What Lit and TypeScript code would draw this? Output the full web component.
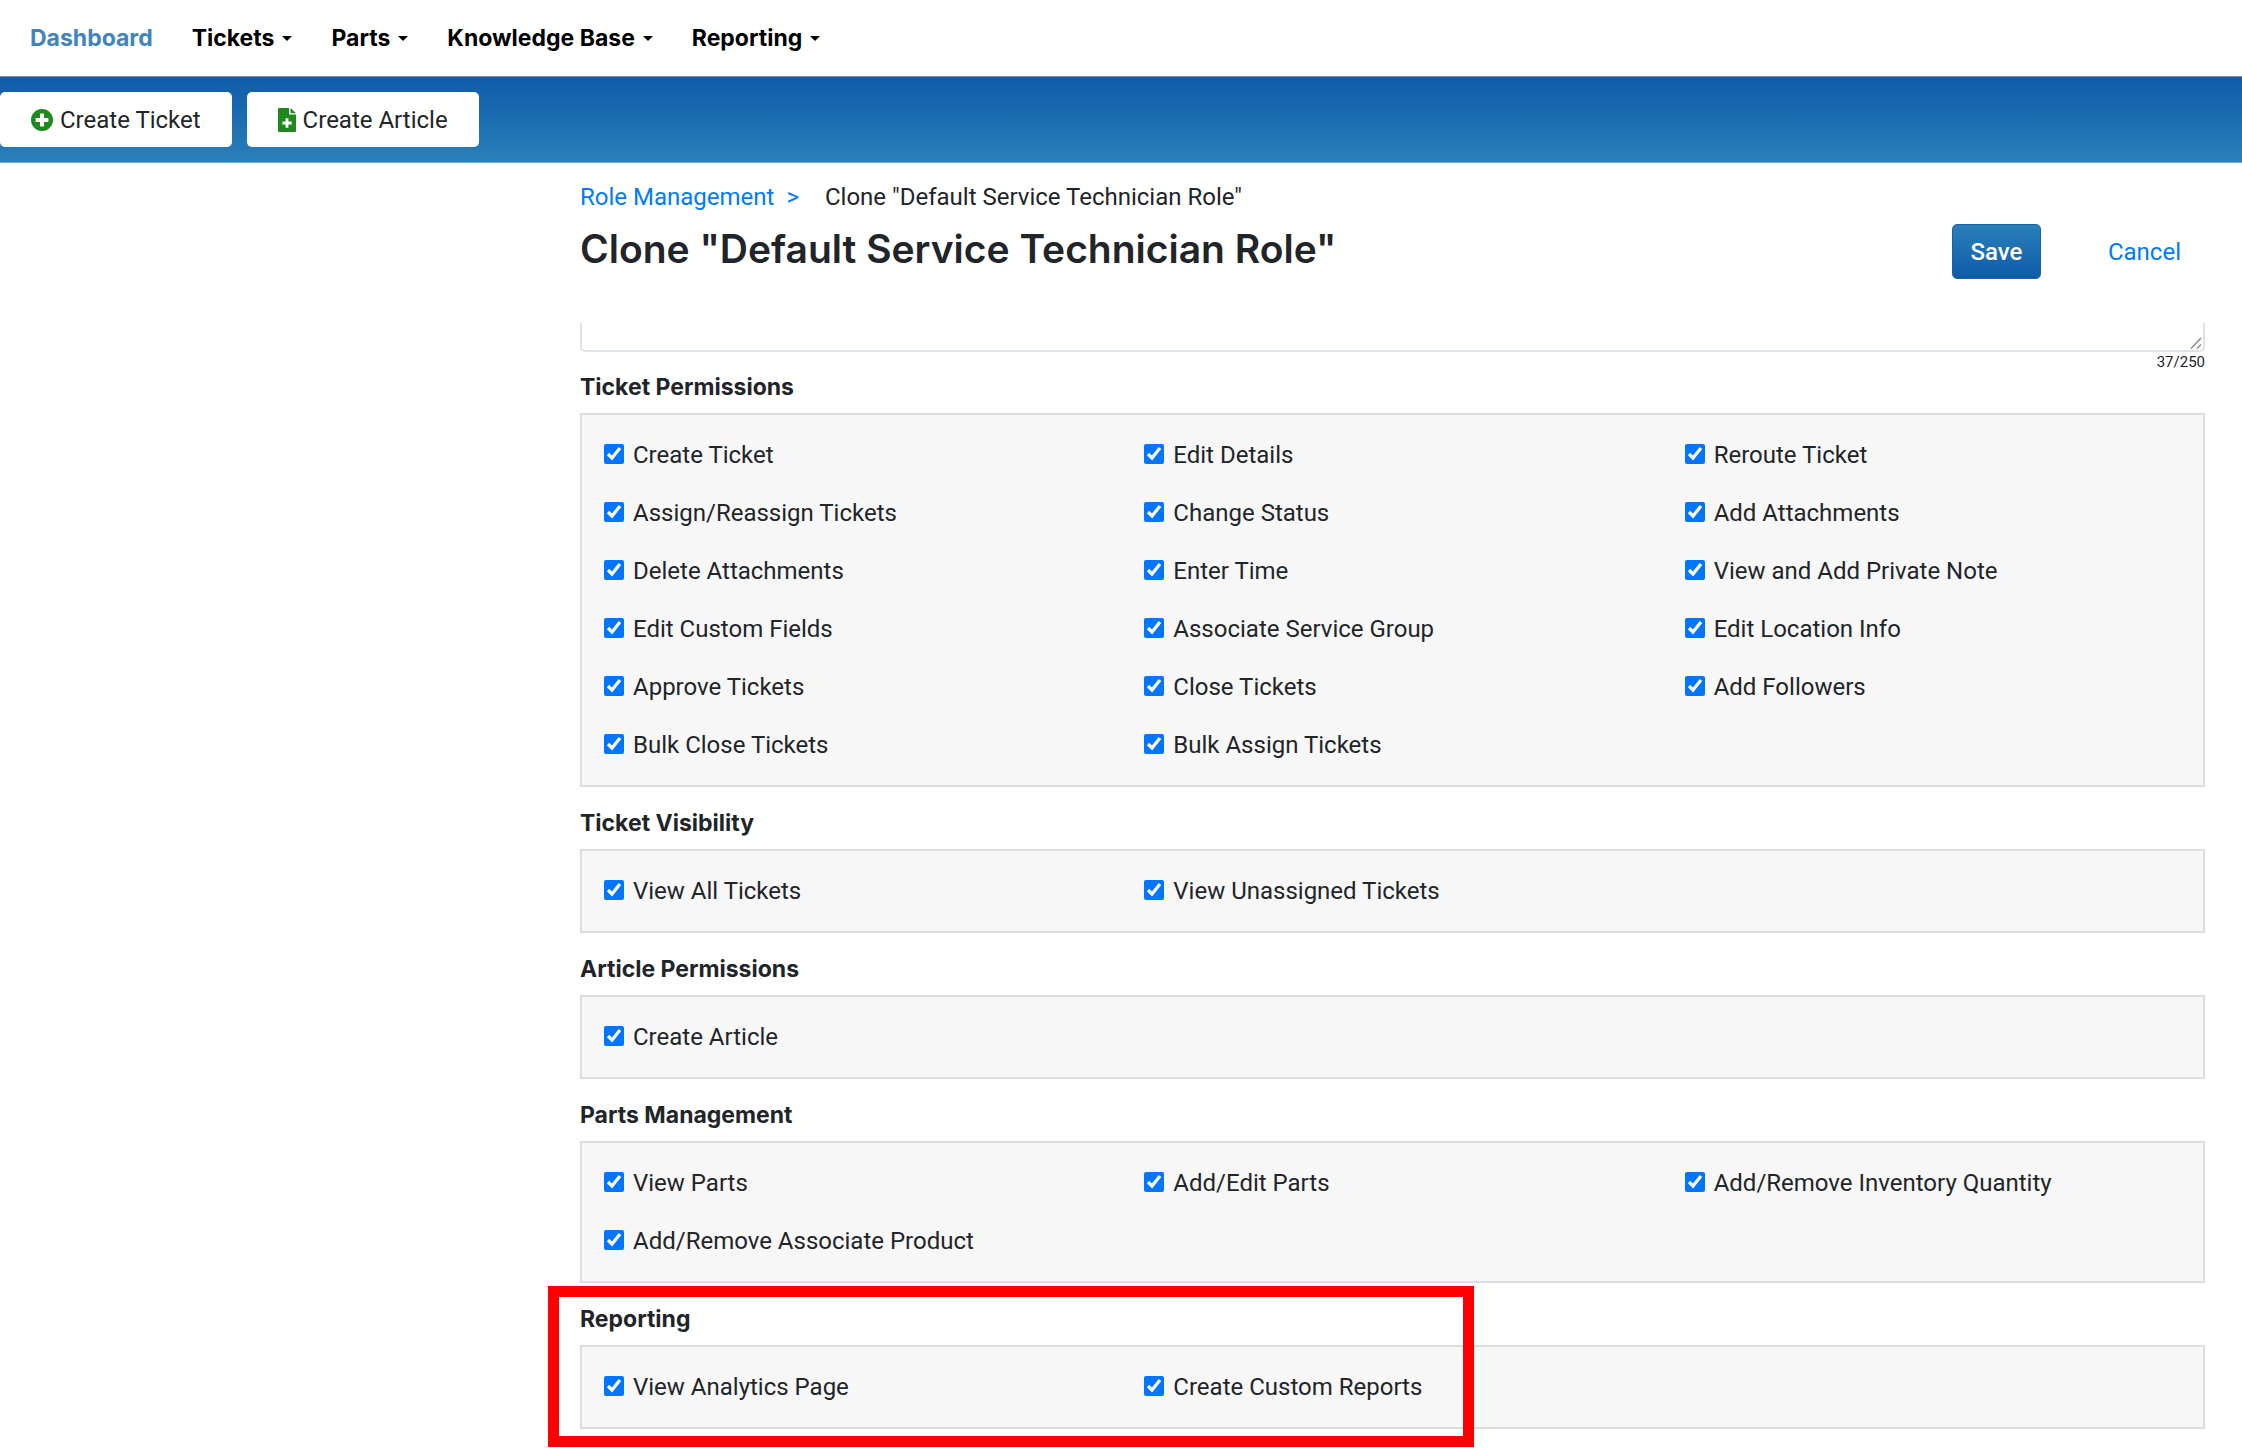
import { LitElement, html, css, svg } from "lit";
import { customElement, property } from "lit/decorators.js";

const plusCircle = svg`<path fill="#1e8a1e" fill-rule="evenodd" d="M11 0a11 11 0 1 0 0 22a11 11 0 0 0 0-22zM9 4.600h4v4.400h4.400v4h-4.400v4.400h-4v-4.400H4.600V9H9z"/>`;
const plusFile = svg`<path fill="#1e8a1e" fill-rule="evenodd" d="M1 0h10v6.500H18V23a1 1 0 0 1-1 1H1a1 1 0 0 1-1-1V1a1 1 0 0 1 1-1zM7.600 10.300v3.300H4.300v2.800h3.300v3.300h2.800v-3.300h3.300v-2.800h-3.300v-3.300z"/><path fill="#1e8a1e" d="M12.500 0L18 5.200h-5.500z"/>`;

@customElement("permission-section")
export class PermissionSection extends LitElement {
  @property() heading = "";
  @property({ attribute: false }) items: string[] = [];
  @property({ type: Boolean }) highlighted = false;

  static styles = css`
    :host {
      display: block;
      position: relative;
    }
    .group {
      margin: 0;
      padding: 0;
      border: 0;
      min-width: 0;
    }
    .title {
      box-sizing: border-box;
      height: 48px;
      padding: 4px 0 0;
      font-family: Inter, Roboto, "Liberation Sans", sans-serif;
      font-size: 23px;
      font-weight: 700;
      line-height: 36px;
    }
    .box {
      display: grid;
      grid-template-columns: repeat(3, minmax(0, 1fr));
      border: 2px solid #d9dee3;
      background: #f7f7f7;
      padding: 11px 0;
    }
    .item {
      display: flex;
      align-items: center;
      gap: 9px;
      height: 58px;
      padding-left: 22px;
    }
    .tick {
      width: 20px;
      height: 20px;
      margin: 0 0 3px;
      accent-color: #0075ff;
    }
    .mark {
      position: absolute;
      top: -11px;
      bottom: -18px;
      left: -32px;
      width: 57%;
      box-sizing: border-box;
      border: 11px solid #ff0000;
      pointer-events: none;
    }
  `;

  render() {
    return html`
      <fieldset class="group">
        <legend class="title">${this.heading}</legend>
        <div class="box">
          ${this.items.map(
            (item) => html`<label class="item"><input class="tick" type="checkbox" checked />${item}</label>`
          )}
        </div>
      </fieldset>
      ${this.highlighted ? html`<div class="mark"></div>` : null}
    `;
  }
}

const sections = [
  {
    heading: "Ticket Permissions",
    items: [
      "Create Ticket", "Edit Details", "Reroute Ticket",
      "Assign/Reassign Tickets", "Change Status", "Add Attachments",
      "Delete Attachments", "Enter Time", "View and Add Private Note",
      "Edit Custom Fields", "Associate Service Group", "Edit Location Info",
      "Approve Tickets", "Close Tickets", "Add Followers",
      "Bulk Close Tickets", "Bulk Assign Tickets",
    ],
  },
  { heading: "Ticket Visibility", items: ["View All Tickets", "View Unassigned Tickets"] },
  { heading: "Article Permissions", items: ["Create Article"] },
  {
    heading: "Parts Management",
    items: ["View Parts", "Add/Edit Parts", "Add/Remove Inventory Quantity", "Add/Remove Associate Product"],
  },
  { heading: "Reporting", items: ["View Analytics Page", "Create Custom Reports"], highlighted: true },
];

@customElement("app-root")
export class AppRoot extends LitElement {
  static styles = css`
    :host {
      display: block;
      background: #fff;
      color: #212529;
      font-family: Roboto, Inter, "Liberation Sans", sans-serif;
      font-size: 24px;
      line-height: 36px;
    }
    a {
      color: #007bff;
      text-decoration: none;
    }
    .nav {
      display: flex;
      align-items: center;
      gap: 39px;
      height: 77px;
      padding-left: 30px;
      border-bottom: 1px solid #8a8f96;
      font-family: Inter, Roboto, "Liberation Sans", sans-serif;
      font-size: 23px;
      font-weight: 700;
      box-sizing: border-box;
    }
    .nav a {
      color: #000;
      display: flex;
      align-items: center;
      gap: 8px;
    }
    .nav .active {
      color: #3e83c3;
    }
    .caret {
      border: 5px solid transparent;
      border-top-color: #000;
      border-bottom: 0;
    }
    .bar {
      display: flex;
      align-items: center;
      gap: 15px;
      height: 86px;
      box-sizing: border-box;
      background: linear-gradient(#0f5ba9, #2a80b9);
      border-bottom: 1px solid #6fb0d8;
    }
    .create {
      display: flex;
      align-items: center;
      gap: 7px;
      height: 55px;
      padding: 0 31px;
      border: 0;
      border-radius: 5px;
      background: #fff;
      color: #212529;
      font: inherit;
    }
    .main {
      padding: 16px 37px 20px 580px;
    }
    .crumbs {
      display: flex;
      gap: 26px;
    }
    .crumbs a {
      display: flex;
      gap: 12px;
    }
    .head {
      display: flex;
      align-items: center;
      height: 73px;
    }
    .head h1 {
      flex: 1;
      margin: 0;
      padding-bottom: 5px;
      font-family: Inter, Roboto, "Liberation Sans", sans-serif;
      font-size: 39px;
      line-height: 48px;
      font-weight: 600;
    }
    .save {
      height: 55px;
      width: 89px;
      padding: 0;
      margin-right: 67px;
      border: 1px solid #1a62a5;
      border-radius: 5px;
      background: linear-gradient(#2a80b9, #0f5ba9);
      color: #fff;
      font: inherit;
      font-weight: 500;
    }
    .cancel {
      margin-right: 24px;
    }
    .clip {
      position: relative;
      display: flex;
      align-items: flex-end;
      height: 29px;
      margin-top: 35px;
      overflow: hidden;
    }
    .description {
      width: 100%;
      height: 120px;
      flex: none;
      box-sizing: border-box;
      border: 2px solid #dee3e8;
      border-radius: 5px;
      background: #fff;
      font: inherit;
      resize: none;
    }
    .grip {
      position: absolute;
      right: 3px;
      bottom: 3px;
    }
    .count {
      font-size: 15px;
      line-height: 20px;
      height: 13px;
      text-align: right;
    }
    .sections {
      display: flex;
      flex-direction: column;
      gap: 14px;
    }
  `;

  private menu(label: string) {
    return html`<a href="#">${label}<span class="caret"></span></a>`;
  }

  render() {
    return html`
      <nav class="nav">
        <a class="active" href="#">Dashboard</a>
        ${["Tickets", "Parts", "Knowledge Base", "Reporting"].map((m) => this.menu(m))}
      </nav>
      <div class="bar">
        <button class="create">
          <svg width="22" height="22" viewBox="0 0 22 22" aria-hidden="true">${plusCircle}</svg>Create Ticket
        </button>
        <button class="create">
          <svg width="18" height="24" viewBox="0 0 18 24" aria-hidden="true">${plusFile}</svg>Create Article
        </button>
      </div>
      <main class="main">
        <div class="crumbs">
          <a href="#"><span>Role Management</span><span>&gt;</span></a>
          <span>Clone "Default Service Technician Role"</span>
        </div>
        <div class="head">
          <h1>Clone "Default Service Technician Role"</h1>
          <button class="save">Save</button>
          <a class="cancel" href="#">Cancel</a>
        </div>
        <div class="clip">
          <textarea class="description" aria-label="Description"></textarea>
          <svg class="grip" width="12" height="12" viewBox="0 0 12 12" aria-hidden="true">
            <path d="M1 11.500L11 1M7 11.500L11 7.500" stroke="#8c8c8c" stroke-width="1.500" fill="none" />
          </svg>
        </div>
        <div class="count">37/250</div>
        <div class="sections">
          ${sections.map(
            (s) => html`<permission-section
              .heading=${s.heading}
              .items=${s.items}
              .highlighted=${!!s.highlighted}
            ></permission-section>`
          )}
        </div>
      </main>
    `;
  }
}
